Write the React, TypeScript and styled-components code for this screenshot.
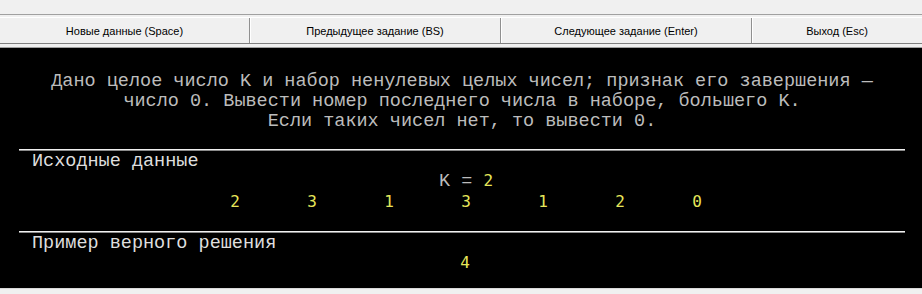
import React from "react";
import styled, { createGlobalStyle } from "styled-components";

const Global = createGlobalStyle`
  html, body { margin: 0; padding: 0; background: #f0f0f0; }
  body { width: 922px; height: 294px; overflow: hidden; }
`;

const Window = styled.div`
  width: 922px;
  height: 294px;
  display: flex;
  flex-direction: column;
  background: #f0f0f0;
`;

const MenuStrip = styled.div`
  height: 14px;
  border-bottom: 1px solid #a0a0a0;
  background: #f0f0f0;
`;

const Gap = styled.div`
  height: 2px;
  background: #f0f0f0;
  border-bottom: 1px solid #ffffff;
`;

const Toolbar = styled.div`
  height: 25px;
  display: flex;
  border-bottom: 1px solid #808080;
  background: #f0f0f0;
`;

const ToolButton = styled.div<{ $w: number; $first?: boolean }>`
  width: ${(p) => p.$w}px;
  box-sizing: border-box;
  display: flex;
  align-items: center;
  justify-content: center;
  font-family: "Liberation Sans", Arial, sans-serif;
  font-size: 11px;
  color: #000;
  border-left: ${(p) => (p.$first ? "none" : "1px solid #909090")};
  box-shadow: ${(p) => (p.$first ? "none" : "inset 1px 0 0 #ffffff")};
`;

const UnderBar = styled.div`
  height: 3px;
  background: #f0f0f0;
  border-bottom: 1px solid #a0a0a0;
`;

const Console = styled.div`
  flex: 1;
  background: #000;
  display: flex;
  flex-direction: column;
  padding-top: 24px;
  font-family: "Liberation Mono", "Courier New", monospace;
  font-size: 18.5px;
  color: #bcbcbc;
`;

const Task = styled.div`
  text-align: center;
  line-height: 20px;
  white-space: pre;
  margin-left: 2px;
`;

const Divider = styled.div<{ $top: number }>`
  margin: ${(p) => p.$top}px 17px 0 19px;
  height: 1px;
  background: #f0f0f0;
  border-bottom: 1px solid #8a8a8a;
`;

const SectionTitle = styled.div`
  margin-top: 2px;
  padding-left: 32px;
  line-height: 17px;
  color: #dedede;
`;

const CenterLine = styled.div<{ $shift: number; $lh: number }>`
  display: flex;
  justify-content: center;
  align-items: baseline;
  line-height: ${(p) => p.$lh}px;
  padding-left: ${(p) => p.$shift}px;
`;

const Label = styled.span`
  white-space: pre;
  color: #bcbcbc;
`;

const Num = styled.span<{ $w?: number }>`
  font-family: "DejaVu Sans Mono", "Lucida Console", monospace;
  font-size: 16px;
  color: #e6e65a;
  width: ${(p) => (p.$w ? `${p.$w}px` : "auto")};
  text-align: center;
`;

const Footer = styled.div`
  height: 5px;
  background: #f0f0f0;
  border-top: 1px solid #d8d8d8;
`;

const buttons = [
  { w: 249, t: "Новые данные (Space)" },
  { w: 251, t: "Предыдущее задание (BS)" },
  { w: 251, t: "Следующее задание (Enter)" },
  { w: 171, t: "Выход (Esc)" },
];

const seq = [2, 3, 1, 3, 1, 2, 0];

export default function App() {
  return (
    <Window>
      <Global />
      <MenuStrip />
      <Gap />
      <Toolbar>
        {buttons.map((b, i) => (
          <ToolButton key={b.t} $w={b.w} $first={i === 0}>
            {b.t}
          </ToolButton>
        ))}
      </Toolbar>
      <UnderBar />
      <Console>
        <Task>
          {"Дано целое число K и набор ненулевых целых чисел; признак его завершения —\nчисло 0. Вывести номер последнего числа в наборе, большего K.\nЕсли таких чисел нет, то вывести 0."}
        </Task>
        <Divider $top={17} />
        <SectionTitle>Исходные данные</SectionTitle>
        <CenterLine $shift={10} $lh={21}>
          <Label>K = </Label>
          <Num>2</Num>
        </CenterLine>
        <CenterLine $shift={10} $lh={20}>
          {seq.map((n, i) => (
            <Num key={i} $w={77}>
              {n}
            </Num>
          ))}
        </CenterLine>
        <Divider $top={19} />
        <SectionTitle>Пример верного решения</SectionTitle>
        <CenterLine $shift={8} $lh={22}>
          <Num>4</Num>
        </CenterLine>
      </Console>
      <Footer />
    </Window>
  );
}
